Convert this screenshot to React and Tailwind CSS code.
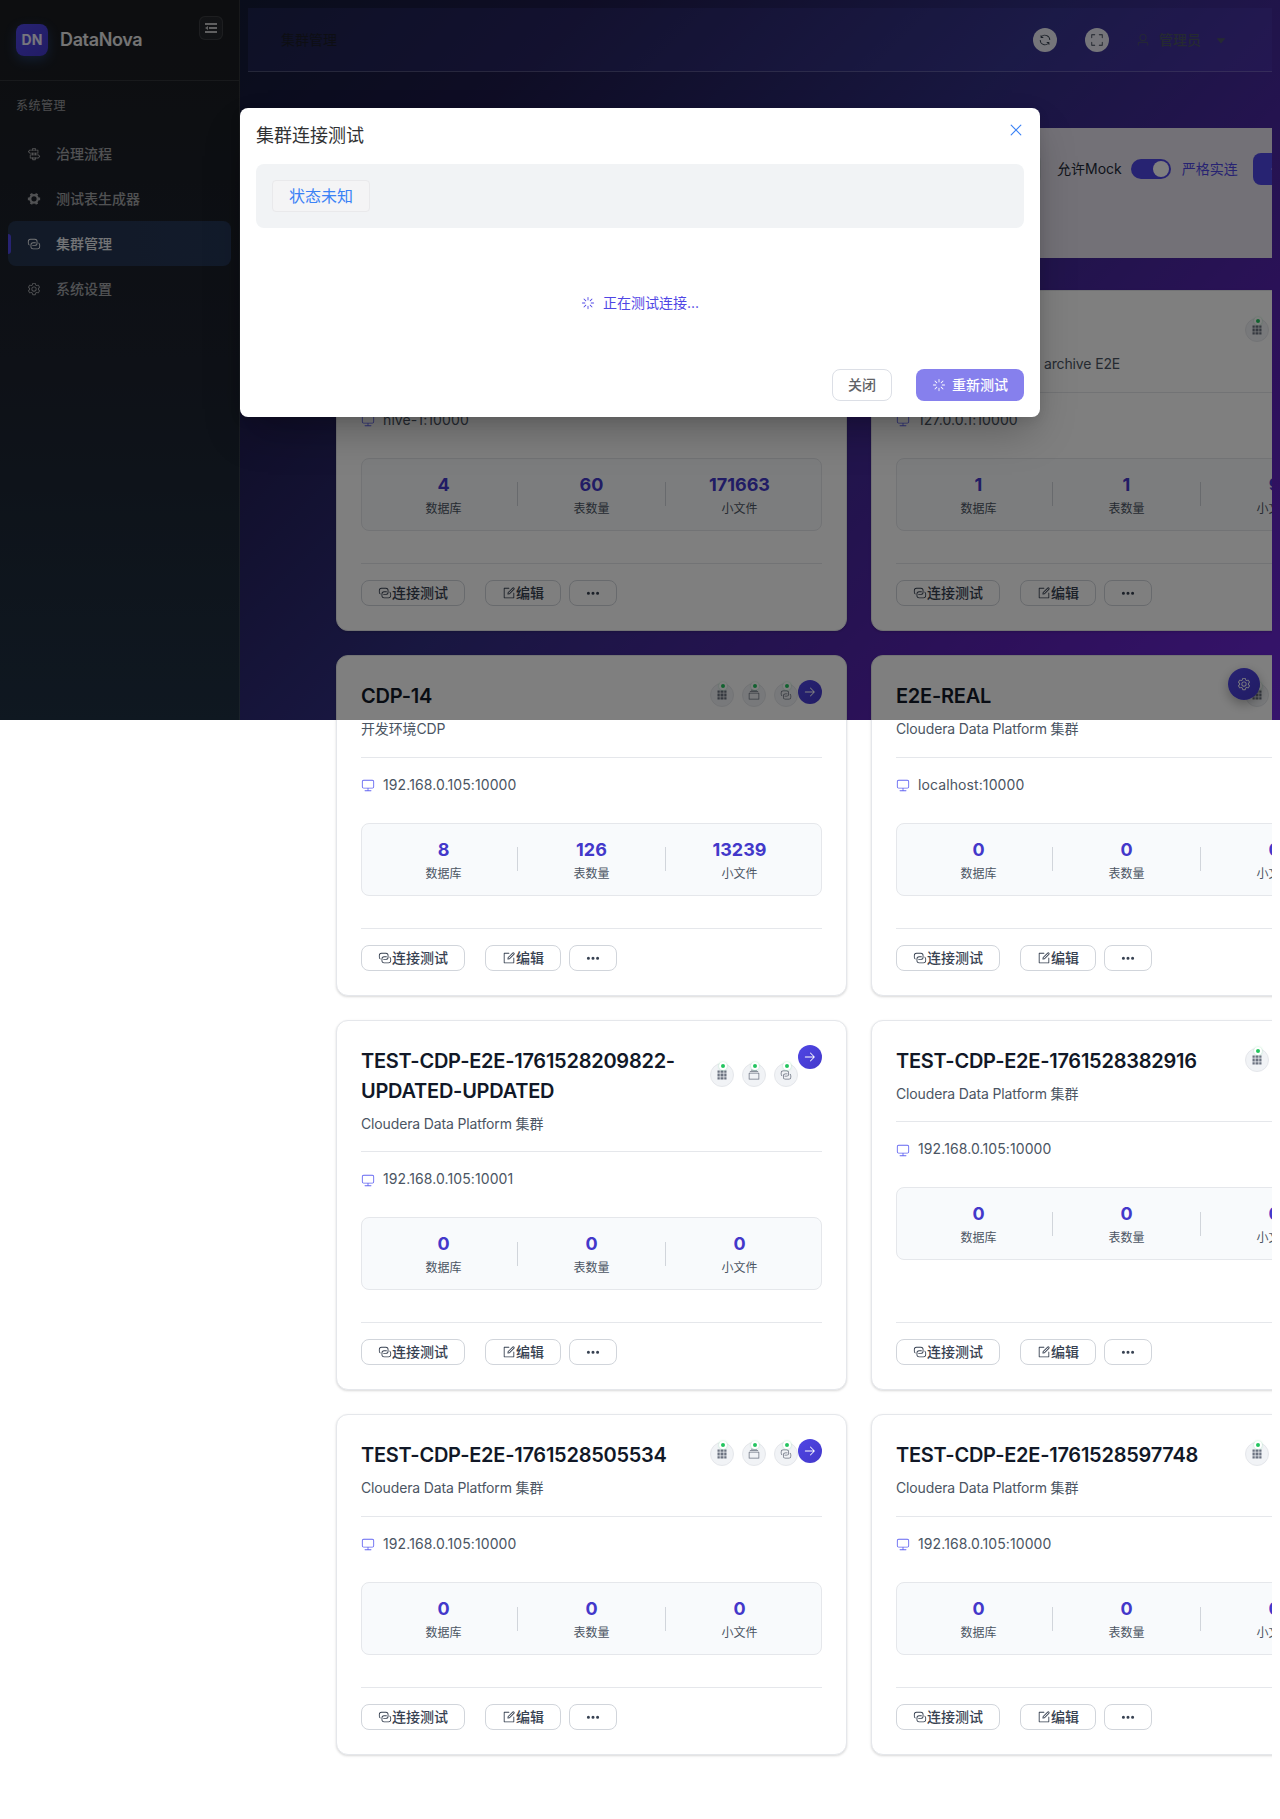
import React from "react";

const ICONS = {
  grid: ["M640 384v256H384V384zm64 0h192v256H704zm-64 512H384V704h256zm64 0V704h192v192zm-64-768v192H384V128zm64 0h192v192H704zM320 384v256H128V384zm0 512H128V704h192zm0-768v192H128V128z"],
  files: ["M128 384v448h768V384zm-32-64h832a32 32 0 0 1 32 32v512a32 32 0 0 1-32 32H96a32 32 0 0 1-32-32V352a32 32 0 0 1 32-32m64-128h704v64H160zm96-128h512v64H256z"],
  connection: [
    "M640 384v64H448a128 128 0 0 0-128 128v128a128 128 0 0 0 128 128h320a128 128 0 0 0 128-128V576a128 128 0 0 0-64-110.848V394.88c74.56 26.368 128 97.472 128 181.056v128a192 192 0 0 1-192 192H448a192 192 0 0 1-192-192V576a192 192 0 0 1 192-192z",
    "M384 640v-64h192a128 128 0 0 0 128-128V320a128 128 0 0 0-128-128H256a128 128 0 0 0-128 128v128a128 128 0 0 0 64 110.848v70.272A192.064 192.064 0 0 1 64 448V320a192 192 0 0 1 192-192h320a192 192 0 0 1 192 192v128a192 192 0 0 1-192 192z",
  ],
  monitor: ["M544 768v128h192a32 32 0 1 1 0 64H288a32 32 0 1 1 0-64h192V768H192A128 128 0 0 1 64 640V256a128 128 0 0 1 128-128h640a128 128 0 0 1 128 128v384a128 128 0 0 1-128 128zM192 192a64 64 0 0 0-64 64v384a64 64 0 0 0 64 64h640a64 64 0 0 0 64-64V256a64 64 0 0 0-64-64z"],
  edit: [
    "M832 512a32 32 0 1 1 64 0v352a32 32 0 0 1-32 32H160a32 32 0 0 1-32-32V160a32 32 0 0 1 32-32h352a32 32 0 0 1 0 64H192v640h640z",
    "m469.952 554.24 52.8-7.552L847.104 222.4a32 32 0 1 0-45.248-45.248L477.44 501.44l-7.552 52.8zm422.4-422.4a96 96 0 0 1 0 135.808l-331.84 331.84a32 32 0 0 1-18.112 9.088L436.8 623.68a32 32 0 0 1-36.224-36.224l15.104-105.6a32 32 0 0 1 9.024-18.112l331.904-331.84a96 96 0 0 1 135.744 0z",
  ],
  more: ["M176 416a112 112 0 1 1 0 224 112 112 0 0 1 0-224m336 0a112 112 0 1 1 0 224 112 112 0 0 1 0-224m336 0a112 112 0 1 1 0 224 112 112 0 0 1 0-224"],
  right: ["M754.752 480H160a32 32 0 1 0 0 64h594.752L521.344 777.344a32 32 0 0 0 45.312 45.312l288-288a32 32 0 0 0 0-45.312l-288-288a32 32 0 1 0-45.312 45.312z"],
  close: ["M764.288 214.592 512 466.88 259.712 214.592a31.936 31.936 0 0 0-45.12 45.12L466.752 512 214.528 764.224a31.936 31.936 0 1 0 45.12 45.184L512 557.184l252.288 252.288a31.936 31.936 0 0 0 45.12-45.12L557.12 512.064l252.288-252.352a31.936 31.936 0 1 0-45.12-45.184z"],
  loading: ["M512 64a32 32 0 0 1 32 32v192a32 32 0 0 1-64 0V96a32 32 0 0 1 32-32m0 640a32 32 0 0 1 32 32v192a32 32 0 1 1-64 0V736a32 32 0 0 1 32-32m448-192a32 32 0 0 1-32 32H736a32 32 0 1 1 0-64h192a32 32 0 0 1 32 32m-640 0a32 32 0 0 1-32 32H96a32 32 0 0 1 0-64h192a32 32 0 0 1 32 32M195.2 195.2a32 32 0 0 1 45.248 0L376.32 331.008a32 32 0 0 1-45.248 45.248L195.2 240.448a32 32 0 0 1 0-45.248m452.544 452.544a32 32 0 0 1 45.248 0L828.8 783.552a32 32 0 0 1-45.248 45.248L647.744 692.992a32 32 0 0 1 0-45.248M828.8 195.264a32 32 0 0 1 0 45.184L692.992 376.32a32 32 0 0 1-45.248-45.248l135.808-135.808a32 32 0 0 1 45.248 0m-452.544 452.48a32 32 0 0 1 0 45.248L240.448 828.8a32 32 0 0 1-45.248-45.248l135.808-135.808a32 32 0 0 1 45.248 0"],
  user: ["M512 512a192 192 0 1 0 0-384 192 192 0 0 0 0 384m0 64a256 256 0 1 1 0-512 256 256 0 0 1 0 512m320 320v-96a96 96 0 0 0-96-96H288a96 96 0 0 0-96 96v96a32 32 0 1 1-64 0v-96a160 160 0 0 1 160-160h448a160 160 0 0 1 160 160v96a32 32 0 1 1-64 0"],
  refresh: ["M771.776 794.88A384 384 0 0 1 128 512h64a320 320 0 0 0 555.712 216.448H654.72a32 32 0 1 1 0-64h149.056a32 32 0 0 1 32 32v148.928a32 32 0 1 1-64 0v-50.56zM276.288 295.616h92.992a32 32 0 0 1 0 64H220.16a32 32 0 0 1-32-32V178.56a32 32 0 0 1 64 0v50.56A384 384 0 0 1 896.128 512h-64a320 320 0 0 0-555.776-216.384z"],
  fullscreen: ["m160 96.064 192 .192a32 32 0 0 1 0 64l-192-.192V352a32 32 0 0 1-64 0V96h64zm0 831.872V928H96V672a32 32 0 1 1 64 0v191.936l192-.192a32 32 0 1 1 0 64zM864 96.064V96h64v256a32 32 0 1 1-64 0V160.064l-192 .192a32 32 0 1 1 0-64zm0 831.872-192-.192a32 32 0 0 1 0-64l192 .192V672a32 32 0 1 1 64 0v256h-64z"],
  fold: ["M896 192H128v128h768zm0 256H384v128h512zm0 256H128v128h768zM320 384 128 512l192 128z"],
  caret: ["m192 384 320 384 320-384z"],
  plus: ["M480 480V128a32 32 0 0 1 64 0v352h352a32 32 0 1 1 0 64H544v352a32 32 0 1 1-64 0V544H128a32 32 0 0 1 0-64z"],
  setting: ["M600.704 64a32 32 0 0 1 30.464 22.208l35.2 109.376c14.784 7.232 28.928 15.36 42.432 24.512l112.384-24.192a32 32 0 0 1 34.432 15.36L944.32 364.8a32 32 0 0 1-4.032 37.504l-77.12 85.12a357.12 357.12 0 0 1 0 49.024l77.12 85.248a32 32 0 0 1 4.032 37.504l-88.704 153.6a32 32 0 0 1-34.432 15.296L708.8 803.904c-13.44 9.088-27.648 17.28-42.368 24.512l-35.264 109.376A32 32 0 0 1 600.704 960H423.296a32 32 0 0 1-30.464-22.208L357.696 828.48a351.616 351.616 0 0 1-42.56-24.64l-112.32 24.256a32 32 0 0 1-34.432-15.36L79.68 659.2a32 32 0 0 1 4.032-37.504l77.12-85.248a357.12 357.12 0 0 1 0-48.896l-77.12-85.248A32 32 0 0 1 79.68 364.8l88.704-153.6a32 32 0 0 1 34.432-15.296l112.32 24.256c13.568-9.152 27.776-17.408 42.56-24.64l35.2-109.312A32 32 0 0 1 423.232 64H600.64zm-23.424 64H446.72l-36.352 113.088-24.512 11.968a294.113 294.113 0 0 0-34.816 20.096l-22.656 15.36-116.224-25.088-65.28 113.152 79.68 88.192-1.92 27.136a293.12 293.12 0 0 0 0 40.192l1.92 27.136-79.808 88.192 65.344 113.152 116.224-25.024 22.656 15.296a294.113 294.113 0 0 0 34.816 20.096l24.512 11.968L446.72 896h130.688l36.48-113.152 24.448-11.904a288.282 288.282 0 0 0 34.752-20.096l22.592-15.296 116.288 25.024 65.28-113.152-79.744-88.192 1.92-27.136a293.12 293.12 0 0 0 0-40.256l-1.92-27.136 79.808-88.128-65.344-113.152-116.288 24.96-22.592-15.232a287.616 287.616 0 0 0-34.752-20.096l-24.448-11.904L577.344 128zM512 320a192 192 0 1 1 0 384 192 192 0 0 1 0-384m0 64a128 128 0 1 0 0 256 128 128 0 0 0 0-256"],
  tools: ["M764.416 254.72a351.68 351.68 0 0 1 86.336 149.184H960v192.064H850.752a351.68 351.68 0 0 1-86.336 149.312l54.72 94.72-166.272 96-54.592-94.72a352.64 352.64 0 0 1-172.48 0L371.136 936l-166.272-96 54.72-94.72a351.68 351.68 0 0 1-86.336-149.312H64v-192h109.248a351.68 351.68 0 0 1 86.336-149.312L204.8 160l166.208-96h.192l54.656 94.592a352.64 352.64 0 0 1 172.48 0L652.8 64h.128L819.2 160l-54.72 94.72zM704 499.968a192 192 0 1 0-384 0 192 192 0 0 0 384 0"],
  guide: [
    "M640 608h-64V416h64zm0 160v160a32 32 0 0 1-32 32H416a32 32 0 0 1-32-32V768h64v128h128V768zM384 608V416h64v192zm256-352h-64V128H448v128h-64V96a32 32 0 0 1 32-32h192a32 32 0 0 1 32 32z",
    "m220.8 256-71.232 80 71.168 80H768V256zm-14.4-64H800a32 32 0 0 1 32 32v224a32 32 0 0 1-32 32H206.4a32 32 0 0 1-23.936-10.752l-99.584-112a32 32 0 0 1 0-42.496l99.584-112A32 32 0 0 1 206.4 192m678.784 496-71.104 80H266.816V608h547.2zm-56.768-144H234.88a32 32 0 0 0-32 32v224a32 32 0 0 0 32 32h593.6a32 32 0 0 0 23.936-10.752l99.584-112a32 32 0 0 0 0-42.496l-99.584-112A32 32 0 0 0 828.48 544z",
  ],
};

function Icon({ name, className = "size-3.5" }) {
  return (
    <svg viewBox="0 0 1024 1024" fill="currentColor" className={`shrink-0 ${className}`} aria-hidden="true">
      {ICONS[name].map((d) => (
        <path key={d} d={d} />
      ))}
    </svg>
  );
}

const MENU = [
  { icon: "guide", label: "治理流程" },
  { icon: "tools", label: "测试表生成器" },
  { icon: "connection", label: "集群管理", active: true },
  { icon: "setting", label: "系统设置" },
];

const CLUSTERS = [
  { id: "a", host: "hive-1:10000", stats: [4, 60, 171663] },
  { id: "b", desc: "archive E2E", indent: true, host: "127.0.0.1:10000", stats: [1, 1, 9] },
  { id: "c", name: "CDP-14", desc: "开发环境CDP", host: "192.168.0.105:10000", stats: [8, 126, 13239] },
  { id: "d", name: "E2E-REAL", desc: "Cloudera Data Platform 集群", host: "localhost:10000", stats: [0, 0, 0] },
  { id: "e", name: "TEST-CDP-E2E-1761528209822-UPDATED-UPDATED", desc: "Cloudera Data Platform 集群", host: "192.168.0.105:10001", stats: [0, 0, 0] },
  { id: "f", name: "TEST-CDP-E2E-1761528382916", desc: "Cloudera Data Platform 集群", host: "192.168.0.105:10000", stats: [0, 0, 0] },
  { id: "g", name: "TEST-CDP-E2E-1761528505534", desc: "Cloudera Data Platform 集群", host: "192.168.0.105:10000", stats: [0, 0, 0] },
  { id: "h", name: "TEST-CDP-E2E-1761528597748", desc: "Cloudera Data Platform 集群", host: "192.168.0.105:10000", stats: [0, 0, 0] },
];

const STAT_LABELS = ["数据库", "表数量", "小文件"];

function Sidebar() {
  return (
    <aside className="h-[720px] w-60 shrink-0 border-r border-white/10 bg-linear-to-b from-[#1a1c20] via-[#1c222e] to-[#1e3042]">
      <div className="flex h-[81px] items-start border-b border-white/10 pl-4 pr-4 pt-4">
        <div className="mt-2 flex size-8 items-center justify-center rounded-lg bg-linear-to-br from-[#4f46e5] to-[#4338ca] text-sm font-bold text-white/90 shadow-[0_4px_12px_rgba(59,130,246,0.3)]">
          DN
        </div>
        <span className="ml-3 mt-2 text-lg font-semibold leading-8 tracking-[-0.36px] text-white/90">DataNova</span>
        <button className="ml-auto flex size-6 items-center justify-center rounded-md border border-white/10 bg-white/5 text-white/70">
          <Icon name="fold" className="size-4" />
        </button>
      </div>
      <div className="px-4 pt-4 text-xs leading-[18px] tracking-[0.5px] text-white/55">系统管理</div>
      <nav className="mt-[16px] flex flex-col px-2">
        {MENU.map((m) => (
          <div
            key={m.label}
            className={`relative flex h-[45px] w-[223px] items-center rounded-lg pl-[19px] text-sm font-medium ${
              m.active ? "bg-[#26384f] bg-linear-to-r from-[#24344f] to-[#243656] text-white/90" : "text-white/60"
            }`}
          >
            {m.active && <span className="absolute left-0 top-[13px] h-5 w-[3px] rounded-r-sm bg-[#4f46e5]" />}
            <Icon name={m.icon} className="size-3.5" />
            <span className="ml-[15px]">{m.label}</span>
          </div>
        ))}
      </nav>
    </aside>
  );
}

function TopBar() {
  return (
    <header className="flex h-16 items-center border-b border-white/20 bg-[#6366f1]/12 pl-[33px] pr-[44px] text-sm text-[#4b5563]">
      <span className="text-[#1b1d27]">集群管理</span>
      <button className="ml-auto flex size-6 items-center justify-center rounded-full bg-white/90 text-[#374151]">
        <Icon name="refresh" />
      </button>
      <button className="ml-7 flex size-6 items-center justify-center rounded-full bg-white/90 text-[#374151]">
        <Icon name="fullscreen" />
      </button>
      <span className="ml-[27px] flex items-center font-medium">
        <Icon name="user" />
        <span className="ml-[9px]">管理员</span>
        <Icon name="caret" className="ml-[13px] size-3.5" />
      </span>
    </header>
  );
}

function Toolbar() {
  return (
    <section className="mt-14 flex h-[130px] items-start bg-[#e6e3ee] pt-[25px] text-sm">
      <div className="h-8 w-[793px] shrink-0 rounded-lg border border-[#d1d5db]" />
      <span className="ml-4 mt-1.5 shrink-0 leading-5 text-[#1f2937]">允许Mock</span>
      <span className="ml-[9px] mt-1.5 flex h-5 w-10 shrink-0 items-center justify-end rounded-full bg-[#4f46e5] px-0.5">
        <span className="size-4 rounded-full bg-white" />
      </span>
      <span className="ml-[11px] mt-1.5 shrink-0 leading-5 text-[#4f46e5]">严格实连</span>
      <button className="ml-[15px] flex h-8 w-28 shrink-0 items-center rounded-lg bg-[#4f46e5] pl-[17px] text-white">
        <Icon name="plus" />
      </button>
    </section>
  );
}

function StatusDot({ icon }) {
  return (
    <span className="relative flex size-6 items-center justify-center rounded-full border border-[#e5e7eb] bg-[#f1f3f6] text-[#6b7280]">
      <Icon name={icon} className="size-3" />
      <span className="absolute -top-0.5 left-2 size-2 rounded-full border-2 border-white bg-[#22c55e] shadow-[0_0_2px_rgba(34,197,94,0.35)]" />
    </span>
  );
}

function CardButton({ icon, label, className }) {
  return (
    <button className={`flex h-[26px] items-center rounded-lg border border-[#d1d5db] px-4 text-sm font-medium leading-none text-[#374151] ${className}`}>
      <Icon name={icon} />
      {label}
    </button>
  );
}

function ClusterCard({ c }) {
  return (
    <article className="relative flex flex-col rounded-xl border border-[#e5e7eb] bg-white p-6 shadow-[0_1px_3px_rgba(0,0,0,0.1),0_1px_2px_rgba(0,0,0,0.06)]">
      <span className="absolute right-6 top-6 flex size-6 items-center justify-center rounded-full bg-linear-to-br from-[#4f46e5] to-[#4338ca] text-white">
        <Icon name="right" />
      </span>
      <div className="border-b border-[#e5e7eb] pb-[16.35px]">
        <div className="flex items-center justify-between pr-6">
          <h3 className="relative top-px min-h-[30px] w-[325px] text-xl font-semibold leading-[30px] tracking-[-0.25px] text-[#111827]">{c.name}</h3>
          <div className="flex gap-2">
            <StatusDot icon="grid" />
            <StatusDot icon="files" />
            <StatusDot icon="connection" />
          </div>
        </div>
        <p className={`mt-2 min-h-[22.4px] text-sm leading-[22.4px] tracking-[-0.14px] text-[#4b5563] ${c.indent ? "pl-[148px]" : ""}`}>{c.desc}</p>
      </div>
      <div className="mt-4 flex items-center gap-2 text-sm leading-[22.4px] tracking-[0.1px] text-[#4b5563]">
        <Icon name="monitor" className="size-3.5 text-[#6366f1]" />
        {c.host}
      </div>
      <div className="mb-8 mt-[26.65px] flex h-[73px] items-center rounded-lg border border-[#e5e7eb] bg-[#f8fafc] px-2">
        {c.stats.map((n, i) => (
          <React.Fragment key={STAT_LABELS[i]}>
            {i > 0 && <span className="h-6 w-px bg-[#d1d5db]" />}
            <div className="flex-1 text-center">
              <div className="text-lg font-bold leading-[27px] text-[#4338ca]">{n}</div>
              <div className="relative top-px text-xs leading-5 text-[#4b5563]">{STAT_LABELS[i]}</div>
            </div>
          </React.Fragment>
        ))}
      </div>
      <div className="mt-auto flex border-t border-[#e5e7eb] pt-4">
        <CardButton icon="connection" label="连接测试" />
        <CardButton icon="edit" label="编辑" className="ml-5" />
        <CardButton icon="more" className="ml-2" />
      </div>
    </article>
  );
}

function ConnectionDialog() {
  return (
    <div role="dialog" className="absolute left-60 top-[108px] flex h-[309px] w-[800px] flex-col rounded-lg bg-white p-4 shadow-[0_20px_40px_-8px_rgba(0,0,0,0.28),0_4px_12px_rgba(0,0,0,0.08)]">
      <div className="flex items-start justify-between">
        <h2 className="text-lg leading-6 text-[#303133]">集群连接测试</h2>
        <Icon name="close" className="-mt-[3px] mr-[-1px] size-[18px] text-[#3b82f6]" />
      </div>
      <div className="mt-4 rounded-lg bg-[#f1f3f5] p-4">
        <span className="flex h-8 w-[98px] items-center justify-center rounded border border-[#e9e9eb] bg-[#f4f4f5] text-base text-[#3b82f6]">
          状态未知
        </span>
      </div>
      <div className="mt-16 flex items-center justify-center gap-2 text-sm leading-[22px] text-[#4f46e5]">
        <Icon name="loading" />
        正在测试连接...
      </div>
      <div className="mt-auto flex justify-end gap-6 text-sm font-medium">
        <button className="h-8 w-[60px] rounded-lg border border-[#dcdfe6] text-[#606266]">关闭</button>
        <button className="flex h-8 w-[108px] items-center justify-center gap-1.5 rounded-lg bg-[#8680ed] text-white">
          <Icon name="loading" />
          重新测试
        </button>
      </div>
    </div>
  );
}

export default function App() {
  return (
    <div className="relative h-[1819px] w-[1280px] overflow-hidden bg-white font-['Inter','Noto_Sans_CJK_SC',sans-serif]">
      <div className="flex h-[720px]">
        <Sidebar />
        <div className="h-[720px] w-[1040px] shrink-0 bg-[linear-gradient(135deg,#131a36_0%,#1e1b4b_20%,#312e81_47%,#5b21b6_80%,#6d28d9_100%)] px-2">
          <main className="h-[720px] overflow-x-clip pt-2">
            <TopBar />
            <Toolbar />
            <div className="ml-[88px] mt-8 grid w-[1046px] grid-cols-2 gap-6">
              {CLUSTERS.map((c) => (
                <ClusterCard key={c.id} c={c} />
              ))}
            </div>
          </main>
        </div>
      </div>
      <button className="absolute left-[1228px] top-[668px] flex size-8 items-center justify-center rounded-full bg-linear-to-br from-[#4f46e5] to-[#4338ca] text-white shadow-[0_4px_12px_rgba(0,0,0,0.3)]">
        <Icon name="setting" />
      </button>
      <div className="absolute inset-x-0 top-0 h-[720px] bg-black/50" />
      <ConnectionDialog />
    </div>
  );
}
